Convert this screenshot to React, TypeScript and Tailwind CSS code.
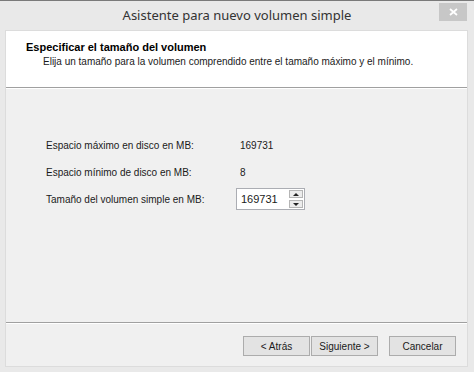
import React from "react";

const ui = { fontFamily: '"Liberation Sans", Arial, sans-serif' };
const titleFont = { fontFamily: '"Noto Sans", "Open Sans", sans-serif' };

function Row({ label, children }: { label: string; children: React.ReactNode }) {
  return (
    <div className="flex items-center h-[22px]">
      <div className="w-[194px] text-[10px] text-[#1a1a1a]">{label}</div>
      {children}
    </div>
  );
}

function Spin() {
  return (
    <div className="ml-[-4px] flex items-center w-[69px] h-[22px] bg-white border border-[#abadb3]">
      <span className="flex-1 pl-[4px] text-[11px] text-[#1a1a1a]">169731</span>
      <div className="flex flex-col gap-[2px] mr-[1px]">
        <div className="w-[14px] h-[8px] bg-[#ececec] border border-[#b5b5b5] flex items-center justify-center">
          <svg width="6" height="3" viewBox="0 0 6 3"><path d="M0 3 L3 0 L6 3 Z" fill="#222" /></svg>
        </div>
        <div className="w-[14px] h-[8px] bg-[#ececec] border border-[#b5b5b5] flex items-center justify-center">
          <svg width="6" height="3" viewBox="0 0 6 3"><path d="M0 0 L6 0 L3 3 Z" fill="#222" /></svg>
        </div>
      </div>
    </div>
  );
}

function Btn({ children }: { children: React.ReactNode }) {
  return (
    <button className="w-[67px] h-[20px] bg-[#e3e3e3] border border-[#acacac] text-[10px] text-[#1a1a1a] flex items-center justify-center">
      {children}
    </button>
  );
}

export default function App() {
  return (
    <div className="w-[474px] h-[372px] bg-[#e9e9e9] border-t border-[#7a7a7a] flex flex-col overflow-hidden" style={ui}>
      <div className="relative h-[29px] flex items-center justify-center">
        <span className="text-[13px] text-[#333] leading-none pb-[1px]" style={titleFont}>
          Asistente para nuevo volumen simple
        </span>
        <div className="absolute top-[2px] right-[7px] w-[28px] h-[18px] bg-[#c7c7c7] flex items-center justify-center">
          <svg width="9" height="8" viewBox="0 0 9 8">
            <path d="M1 1 L8 7 M8 1 L1 7" stroke="#fff" strokeWidth="1.8" />
          </svg>
        </div>
      </div>

      <div className="ml-[5px] mr-[6px] h-[337px] border border-[#dcdcdc] bg-[#f0f0f0] flex flex-col">
        <div className="h-[56px] bg-white pl-[20px] pt-[9px]">
          <div className="text-[11px] font-bold text-black leading-[14px]">Especificar el tamaño del volumen</div>
          <div className="pl-[17px] text-[10px] text-[#1a1a1a] leading-[14px] mt-[1px]">
            Elija un tamaño para la volumen comprendido entre el tamaño máximo y el mínimo.
          </div>
        </div>
        <div className="h-px bg-[#a0a0a0]" />
        <div className="h-px bg-white" />

        <div className="h-[233px] pl-[40px] pt-[45px] flex flex-col gap-[5px]">
          <Row label="Espacio máximo en disco en MB:">
            <span className="text-[10px] text-[#1a1a1a]">169731</span>
          </Row>
          <Row label="Espacio mínimo de disco en MB:">
            <span className="text-[10px] text-[#1a1a1a]">8</span>
          </Row>
          <Row label="Tamaño del volumen simple en MB:">
            <Spin />
          </Row>
        </div>

        <div className="h-px bg-[#a0a0a0]" />
        <div className="h-px bg-white" />

        <div className="flex-1 flex items-start justify-end pt-[12px] pr-[11px]">
          <div className="flex gap-[1px]">
            <Btn>&lt; Atrás</Btn>
            <Btn>Siguiente &gt;</Btn>
          </div>
          <div className="ml-[11px]">
            <Btn>Cancelar</Btn>
          </div>
        </div>
      </div>
    </div>
  );
}
